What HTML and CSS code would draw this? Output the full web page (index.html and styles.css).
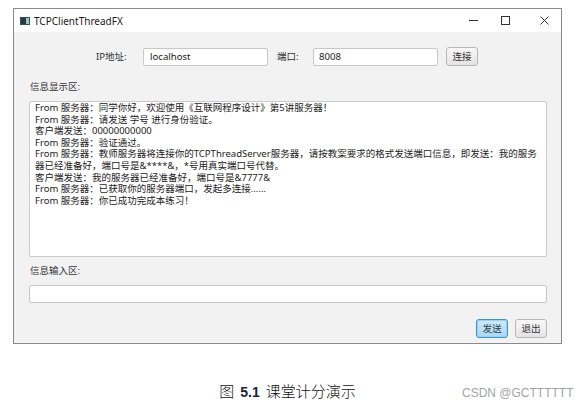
FILE: index.html
```html
<!DOCTYPE html>
<html lang="zh-CN">
<head>
<meta charset="utf-8">
<title>TCPClientThreadFX</title>
<link rel="stylesheet" href="styles.css">
</head>
<body>
<div class="page">
  <div class="window">
    <div class="titlebar">
      <svg class="app-icon" width="10" height="8" viewBox="0 0 10 8">
        <rect x="0" y="0" width="10" height="8" fill="#3d4b5c"/>
        <rect x="1" y="1" width="5" height="6" fill="#2a3848"/>
        <rect x="6" y="1" width="3" height="6" fill="#8fd0b0"/>
      </svg>
      <span class="title">TCPClientThreadFX</span>
      <div class="controls">
        <svg class="ctl ctl-min" width="9" height="9" viewBox="0 0 9 9"><path d="M0 4.5H9" stroke="#333" stroke-width="1"/></svg>
        <svg class="ctl ctl-max" width="9" height="9" viewBox="0 0 9 9"><rect x="0.5" y="0.5" width="8" height="8" fill="none" stroke="#333" stroke-width="1"/></svg>
        <svg class="ctl ctl-close" width="9" height="9" viewBox="0 0 9 9"><path d="M0.5 0.5L8.5 8.5M8.5 0.5L0.5 8.5" stroke="#333" stroke-width="1"/></svg>
      </div>
    </div>
    <div class="body">
      <div class="connect-row">
        <span class="lbl lbl-ip">IP地址:</span>
        <div class="field field-host">localhost</div>
        <span class="lbl lbl-port">端口:</span>
        <div class="field field-port">8008</div>
        <button class="btn btn-connect">连接</button>
      </div>
      <div class="section-label">信息显示区:</div>
      <div class="display">
        <div class="line">From 服务器：同学你好，欢迎使用《互联网程序设计》第5讲服务器！</div>
        <div class="line">From 服务器：请发送 学号 进行身份验证。</div>
        <div class="line">客户端发送：00000000000</div>
        <div class="line">From 服务器：验证通过。</div>
        <div class="line">From 服务器：教师服务器将连接你的TCPThreadServer服务器，请按教案要求的格式发送端口信息，即发送：我的服务</div>
        <div class="line">器已经准备好，端口号是&amp;****&amp;，*号用真实端口号代替。</div>
        <div class="line">客户端发送：我的服务器已经准备好，端口号是&amp;7777&amp;</div>
        <div class="line">From 服务器：已获取你的服务器端口，发起多连接......</div>
        <div class="line">From 服务器：你已成功完成本练习！</div>
      </div>
      <div class="section-label section-label-input">信息输入区:</div>
      <div class="field field-input"></div>
      <div class="button-row">
        <button class="btn btn-send">发送</button>
        <button class="btn btn-exit">退出</button>
      </div>
    </div>
  </div>
  <div class="caption">图<b class="fig-no">5.1</b>课堂计分演示</div>
  <div class="watermark">CSDN @GCTTTTTT</div>
</div>
</body>
</html>
```
FILE: styles.css
```css
* { box-sizing: border-box; }
html, body { margin: 0; padding: 0; background: #ffffff; }
body {
  width: 588px;
  height: 410px;
  overflow: hidden;
  font-family: "Noto Sans", "Noto Sans CJK SC", sans-serif;
  color: #2b2b2b;
}
.page {
  position: relative;
  width: 588px;
  height: 410px;
  padding: 8px 0 0 13px;
}
.window {
  width: 549px;
  height: 336px;
  border: 1px solid #8a8a8a;
  display: flex;
  flex-direction: column;
  background: #f2f2f2;
}
.titlebar {
  height: 23px;
  background: #ffffff;
  display: flex;
  align-items: center;
  flex-shrink: 0;
}
.app-icon { margin-left: 6px; margin-top: 1px; display: block; }
.title {
  margin-left: 4px;
  font-size: 10px;
  color: #1a1a1a;
  font-family: "Noto Sans", sans-serif;
}
.controls {
  margin-left: auto;
  display: flex;
  align-items: center;
  margin-right: 12px;
}
.ctl { display: block; }
.ctl-max { margin-left: 23px; }
.ctl-close { margin-left: 30px; }
.body {
  flex: 1;
  padding: 0 14px 0 15px;
  display: flex;
  flex-direction: column;
  font-size: 9.5px;
}
.connect-row {
  margin-top: 15px;
  height: 19px;
  display: flex;
  align-items: center;
  padding-left: 67px;
}
.lbl { color: #333; line-height: 12px; }
.lbl-ip { width: 47px; }
.lbl-port { width: 36px; margin-left: 9px; }
.field {
  background: #ffffff;
  border: 1px solid #c8c8c8;
  border-radius: 2px;
  height: 18px;
  line-height: 16px;
  padding-left: 6px;
  color: #222;
  font-size: 9.6px;
}
.field-host, .field-port { width: 125px; }
.field-port { padding-left: 5px; }
.btn {
  font-family: "Noto Sans CJK SC", "Noto Sans", sans-serif;
  font-size: 9.6px;
  color: #333;
  height: 19px;
  width: 32px;
  padding: 0;
  border: 1px solid #b8b8b8;
  border-radius: 3px;
  background: linear-gradient(#f8f8f8, #e3e3e3);
  line-height: 17px;
}
.btn-connect { margin-left: 8px; }
.section-label {
  margin-top: 15px;
  line-height: 12px;
  height: 12px;
  color: #333;
  padding-left: 1px;
}
.display {
  margin-top: 8px;
  height: 156px;
  background: #ffffff;
  border: 1px solid #cbcbcb;
  border-radius: 2px;
  padding: 0 0 0 5px;
  color: #222;
  line-height: 11.6px;
}
.line { white-space: nowrap; }
.section-label-input { margin-top: 8px; }
.field-input {
  margin-top: 8px;
  height: 18px;
}
.button-row {
  margin-top: 16px;
  display: flex;
  justify-content: flex-end;
  gap: 7px;
}
.btn-send {
  border: 1px solid #3a92cf;
  background: linear-gradient(#cfe9f9, #acd8f3);
  box-shadow: inset 0 0 0 1px #9fd2f2;
  color: #2d3e4c;
}
.caption {
  width: 549px;
  margin-top: 37px;
  text-align: center;
  font-family: "Noto Sans CJK SC", sans-serif;
  font-weight: 300;
  font-size: 15px;
  line-height: 20px;
  color: #111;
}
.fig-no {
  font-family: "Liberation Sans", sans-serif;
  font-weight: bold;
  font-size: 14px;
  color: #1c2434;
  margin: 0 6px;
}
.watermark {
  position: absolute;
  left: 462px;
  top: 386px;
  font-family: "Liberation Sans", sans-serif;
  font-size: 12px;
  color: #a3a3a3;
  white-space: nowrap;
}
```
